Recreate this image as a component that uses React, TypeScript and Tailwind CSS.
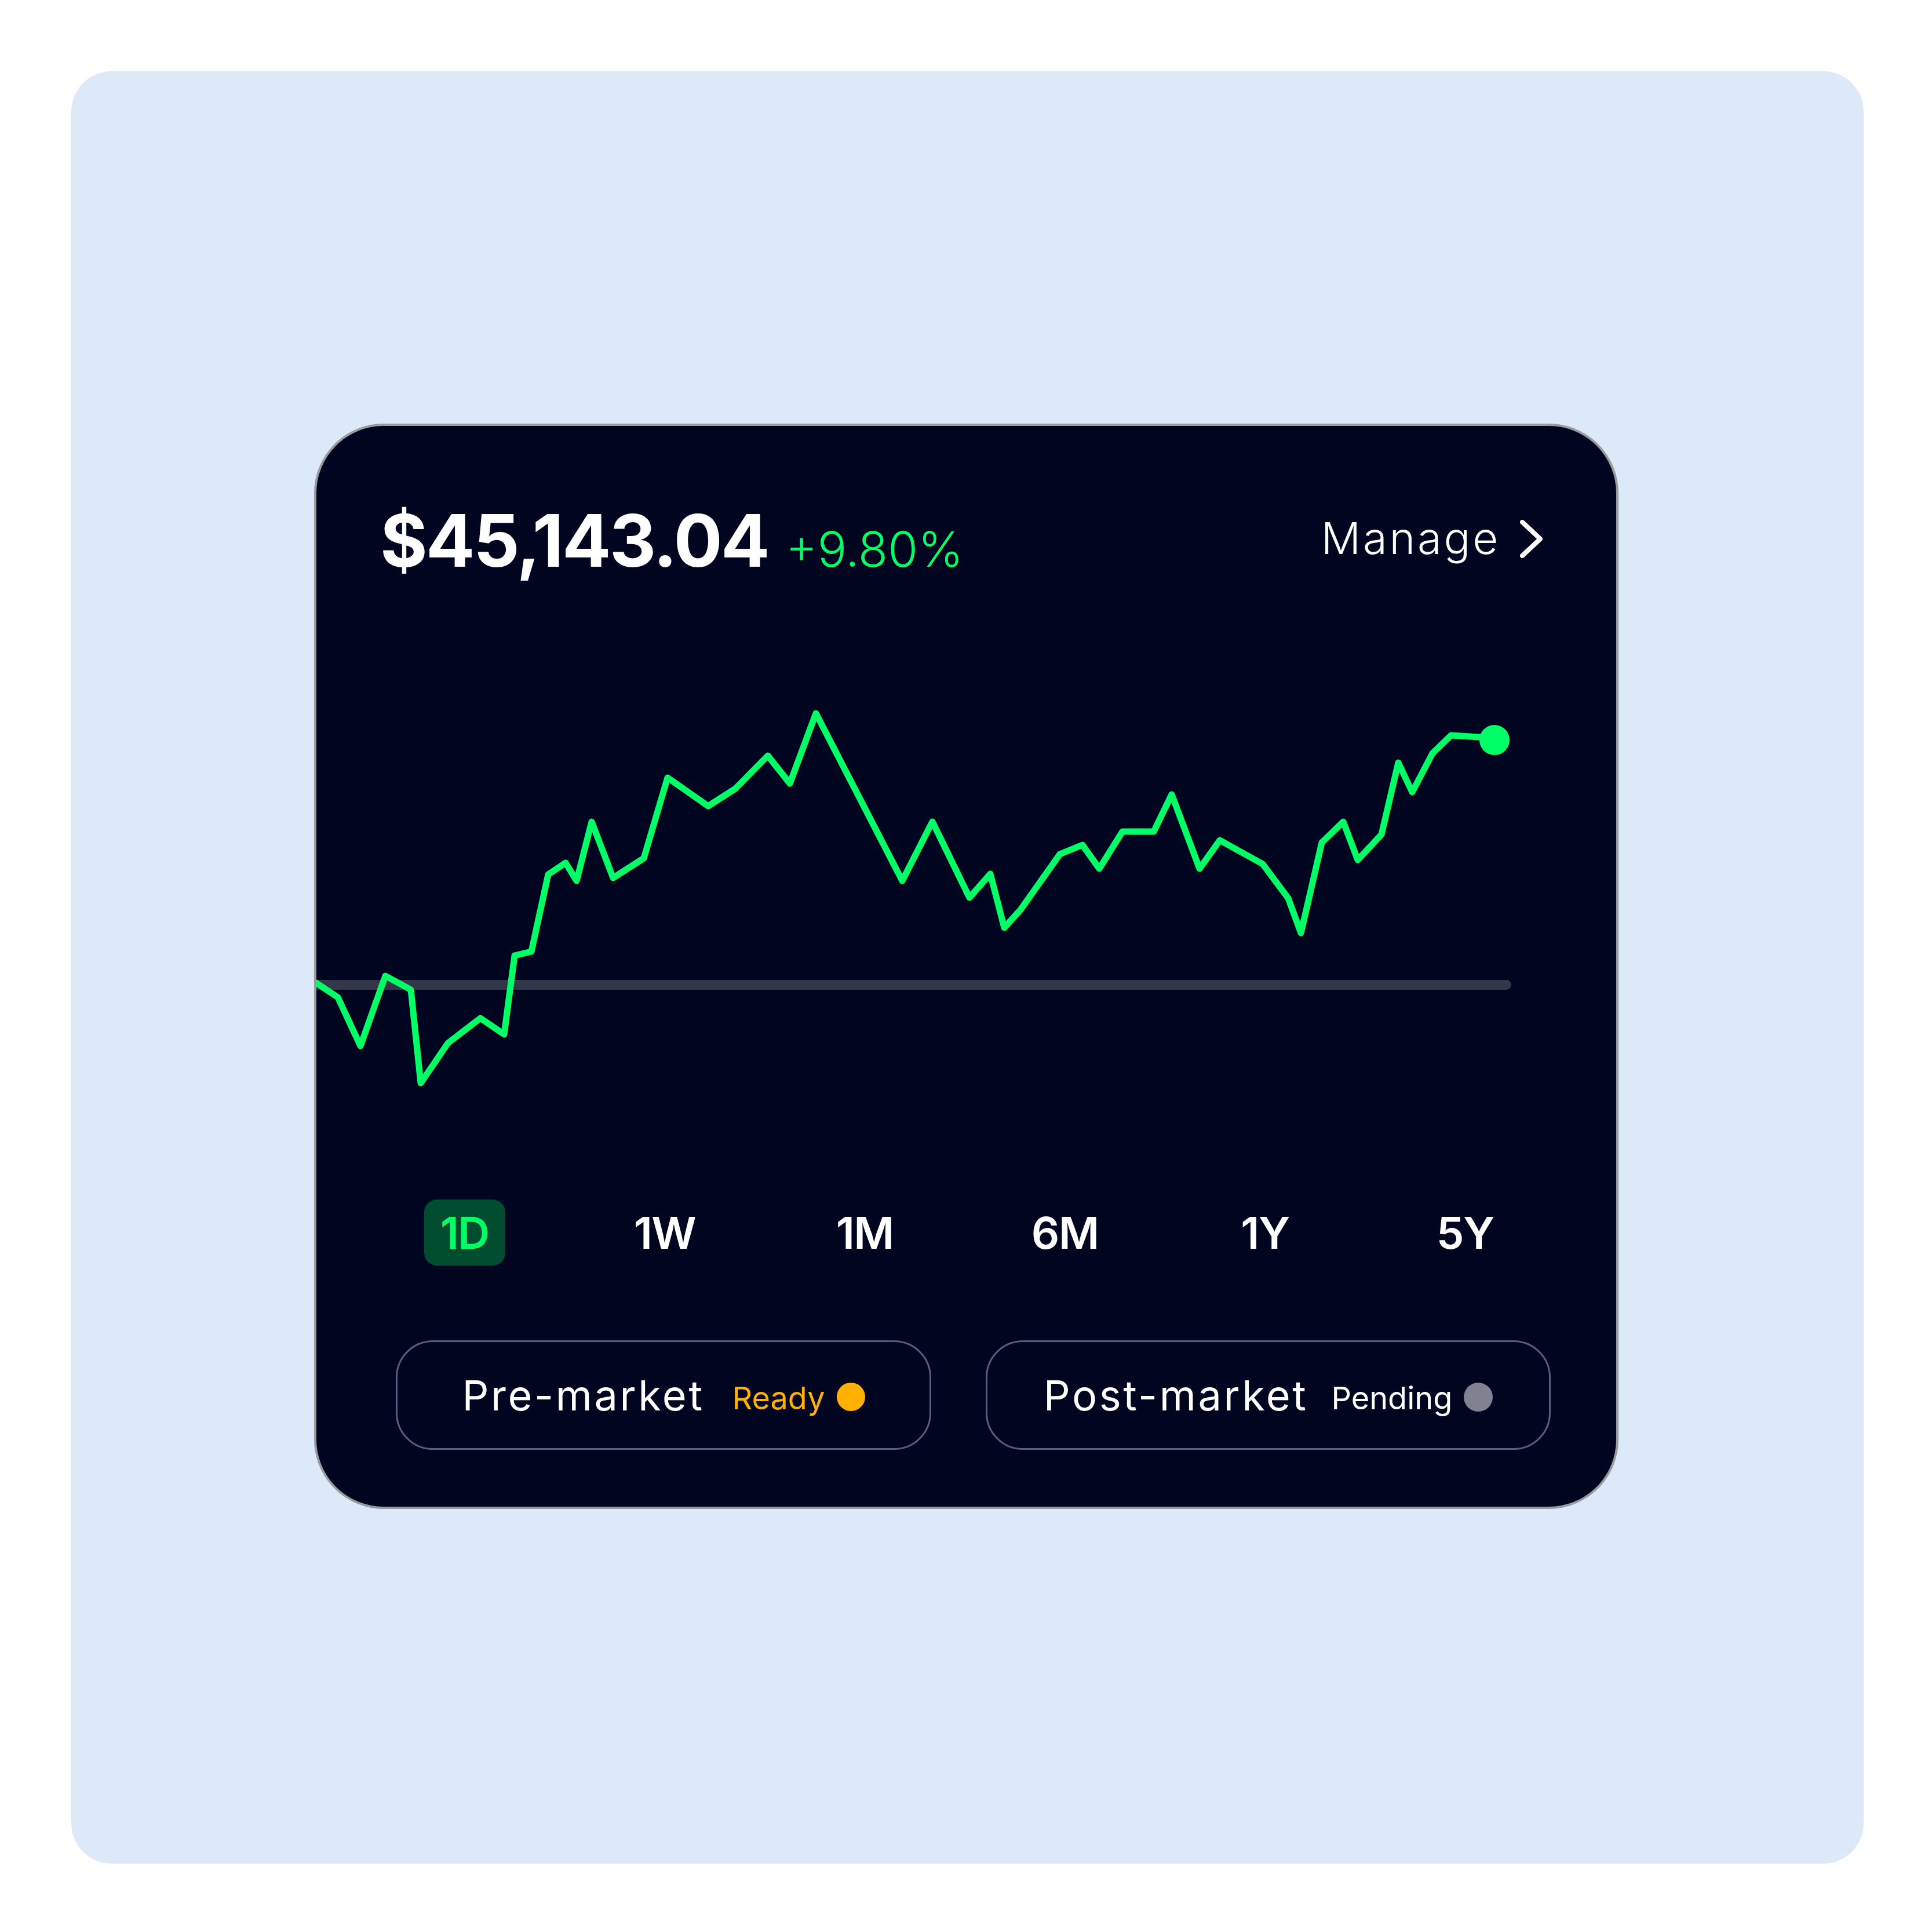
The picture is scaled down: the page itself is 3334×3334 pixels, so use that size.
import React from "react";

const pts: [number, number][] = [
  [538, 1691], [546, 1695], [582, 1719], [621, 1803], [664, 1682], [708, 1706], [725, 1867],
  [772, 1798], [828, 1755], [869, 1783], [887, 1647], [916, 1640], [945, 1507],
  [975, 1487], [994, 1518], [1020, 1416], [1057, 1513], [1110, 1479], [1151, 1340],
  [1221, 1389], [1268, 1359], [1324, 1302], [1362, 1350], [1407, 1229], [1556, 1518],
  [1608, 1416], [1672, 1547], [1708, 1506], [1732, 1599], [1760, 1568], [1828, 1472],
  [1867, 1456], [1896, 1497], [1936, 1433], [1990, 1433], [2021, 1369], [2069, 1497],
  [2104, 1448], [2178, 1489], [2222, 1548], [2244, 1608], [2280, 1452], [2317, 1416],
  [2342, 1482], [2383, 1438], [2412, 1314], [2436, 1365], [2471, 1298], [2503, 1267],
  [2552, 1270], [2578, 1274],
];

const ranges = ["1D", "1W", "1M", "6M", "1Y", "5Y"];

const font = { fontFamily: "Inter, 'Noto Sans', sans-serif" };

export default function App() {
  return (
    <div className="w-[3334px] h-[3334px] bg-white p-[123px]" style={font}>
      <div className="w-[3093px] h-[3093px] bg-[#dce9f8] rounded-[70px] flex items-center justify-center">
        <div className="w-[2251px] h-[1873px] ml-[-4px] mt-[-4px] rounded-[120px] border-[4px] border-[#9a9a9c] bg-[#000620] overflow-hidden flex flex-col">
          {/* header */}
          <div className="flex items-center justify-between pl-[110px] pr-[126px] pt-[117px] h-[277px]">
            <div className="flex items-baseline gap-[30px]">
              <span className="text-white font-bold text-[125px] leading-none tracking-[-0.022em]">$45,143.04</span>
              <span className="text-[#00ff66] font-light text-[84px] leading-none">+9.80%</span>
            </div>
            <div className="flex items-center gap-[34px] mt-[-8px]">
              <span className="text-white font-light text-[76px] leading-none tracking-[0.05em]">Manage</span>
              <svg width="40" height="66" viewBox="0 0 40 66" className="mt-[4px]">
                <path d="M4 4 L35 33 L4 62" fill="none" stroke="white" strokeWidth="8" strokeLinecap="round" strokeLinejoin="round" />
              </svg>
            </div>
          </div>
          {/* chart */}
          <svg width="2063" height="1058" viewBox="545 1010 2063 1058" className="block shrink-0">
            <rect x="530" y="1689" width="2077" height="17" rx="8.5" fill="#34374a" />
            <polyline
              points={pts.map((p) => p.join(",")).join(" ")}
              fill="none"
              stroke="#00ff66"
              strokeWidth="11"
              strokeLinejoin="round"
              strokeLinecap="round"
            />
            <circle cx="2578" cy="1275" r="26" fill="#00ff66" />
          </svg>
          {/* ranges */}
          <div className="grid grid-cols-6 w-[2072px] ml-[83px] h-[114px]">
            {ranges.map((r, i) => (
              <div key={r} className="flex items-center justify-center">
                {i === 0 ? (
                  <div className="w-[140px] h-[114px] rounded-[22px] bg-[#004d30] flex items-center justify-center">
                    <span className="text-[#00ff66] font-semibold text-[76px] leading-none tracking-[-0.02em]">{r}</span>
                  </div>
                ) : (
                  <span className="text-white font-semibold text-[76px] leading-none tracking-[-0.02em]">{r}</span>
                )}
              </div>
            ))}
          </div>
          {/* buttons */}
          <div className="flex gap-[94px] ml-[137px] mt-[129px]">
            <div className="w-[924px] h-[189px] rounded-[64px] border-[3px] border-[#565f80] flex items-center justify-center">
              <span className="text-white text-[72px] leading-none tracking-[0.05em]">Pre-market</span>
              <span className="text-[#ffb000] text-[54px] leading-none ml-[48px] mt-[10px]">Ready</span>
              <span className="w-[49px] h-[49px] rounded-full bg-[#ffb000] ml-[20px] mt-[6px]" />
            </div>
            <div className="w-[975px] h-[189px] rounded-[64px] border-[3px] border-[#565f80] flex items-center justify-center">
              <span className="text-white text-[72px] leading-none tracking-[0.05em]">Post-market</span>
              <span className="text-white text-[54px] leading-none ml-[40px] mt-[10px]">Pending</span>
              <span className="w-[50px] h-[50px] rounded-full bg-[#80828f] ml-[20px] mt-[6px]" />
            </div>
          </div>
        </div>
      </div>
    </div>
  );
}
